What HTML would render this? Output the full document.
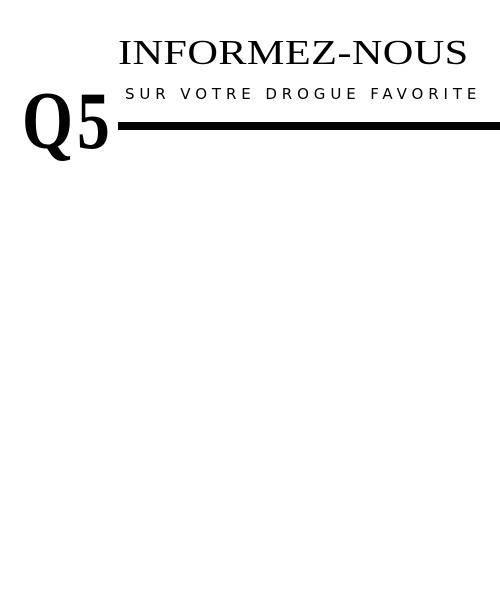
<!DOCTYPE html>
<html><head><style>
body{margin:0;width:500px;height:600px;background:#fff;position:relative;overflow:hidden}
.t{position:absolute;left:118px;top:33px;font-family:"Liberation Serif",serif;font-size:35px;line-height:40px;white-space:nowrap;letter-spacing:0.3px;transform:scaleX(1.21);transform-origin:left}
.s{position:absolute;left:125px;top:85px;font-family:"DejaVu Sans","Liberation Sans",sans-serif;font-size:15px;line-height:18px;letter-spacing:4.9px;white-space:nowrap}
.q{position:absolute;left:22px;top:76px;font-family:"Liberation Serif",serif;font-weight:bold;font-size:82px;line-height:90px;letter-spacing:5px;white-space:nowrap;transform:scaleX(0.8);transform-origin:left}
.l{position:absolute;left:118px;top:122px;width:382px;height:8px;background:#000}
</style></head><body>
<div class="t">INFORMEZ-NOUS</div>
<div class="s">SUR VOTRE DROGUE FAVORITE</div>
<div class="q">Q5</div>
<div class="l"></div>
</body></html>
